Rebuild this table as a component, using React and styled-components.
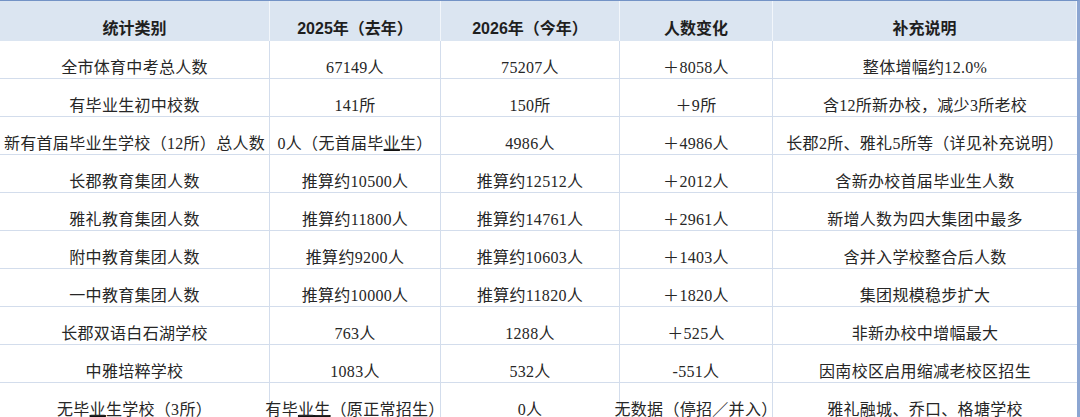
import React from 'react';
import styled, { createGlobalStyle } from 'styled-components';

const GlobalStyle = createGlobalStyle`
  body {
    margin: 0;
    background: #ffffff;
  }
`;

const Table = styled.div`
  display: grid;
  grid-template-columns: 270px 171px 179px 153px 304px;
  width: 1080px;
  box-sizing: border-box;
  border-top: 1px solid #7393c6;
  border-right: 3px solid #8ca6d2;
  font-family: "Liberation Serif", "Noto Sans CJK SC", serif;
  font-size: 16px;
  color: #262626;
`;

const HeadCell = styled.div`
  box-sizing: border-box;
  height: 40px;
  background: #dbe5f1;
  border-right: 1px solid #f2f6fb;
  display: flex;
  align-items: flex-end;
  justify-content: center;
  padding-bottom: 2px;
  line-height: 20px;
  font-family: "Liberation Sans", "Noto Sans CJK SC", sans-serif;
  font-weight: 700;
  color: #1f1f1f;
  white-space: nowrap;

  &:last-child {
    border-right: none;
  }
`;

const Cell = styled.div`
  box-sizing: border-box;
  height: 38px;
  border-right: ${p => (p.$last ? 'none' : '1px solid #d3ddec')};
  border-bottom: 1px solid #d3ddec;
  display: flex;
  align-items: flex-end;
  justify-content: center;
  line-height: 20px;
  white-space: nowrap;
  letter-spacing: 0.3px;
`;

const Mark = styled.span`
  text-decoration: underline;
  text-decoration-thickness: 2px;
  text-underline-offset: 0px;
  text-decoration-color: #111;
`;

const heads = ['统计类别', '2025年（去年）', '2026年（今年）', '人数变化', '补充说明'];

const rows = [
  ['全市体育中考总人数', '67149人', '75207人', '＋8058人', '整体增幅约12.0%'],
  ['有毕业生初中校数', '141所', '150所', '＋9所', '含12所新办校，减少3所老校'],
  [
    '新有首届毕业生学校（12所）总人数',
    <>0人（无首届毕<Mark>业</Mark>生）</>,
    '4986人',
    '＋4986人',
    '长郡2所、雅礼5所等（详见补充说明）',
  ],
  ['长郡教育集团人数', '推算约10500人', '推算约12512人', '＋2012人', '含新办校首届毕业生人数'],
  ['雅礼教育集团人数', '推算约11800人', '推算约14761人', '＋2961人', '新增人数为四大集团中最多'],
  ['附中教育集团人数', '推算约9200人', '推算约10603人', '＋1403人', '含并入学校整合后人数'],
  ['一中教育集团人数', '推算约10000人', '推算约11820人', '＋1820人', '集团规模稳步扩大'],
  ['长郡双语白石湖学校', '763人', '1288人', '＋525人', '非新办校中增幅最大'],
  ['中雅培粹学校', '1083人', '532人', '-551人', '因南校区启用缩减老校区招生'],
  [
    <>无毕<Mark>业</Mark>生学校（3所）</>,
    <>有毕<Mark>业生</Mark>（原正常招生）</>,
    '0人',
    '无数据（停招／并入）',
    '雅礼融城、乔口、格塘学校',
  ],
];

export default function App() {
  return (
    <>
      <GlobalStyle />
      <Table>
        {heads.map(h => (
          <HeadCell key={h}>{h}</HeadCell>
        ))}
        {rows.map((row, i) =>
          row.map((v, j) => (
            <Cell key={i + '-' + j} $last={j === 4}>
              {v}
            </Cell>
          ))
        )}
      </Table>
    </>
  );
}
